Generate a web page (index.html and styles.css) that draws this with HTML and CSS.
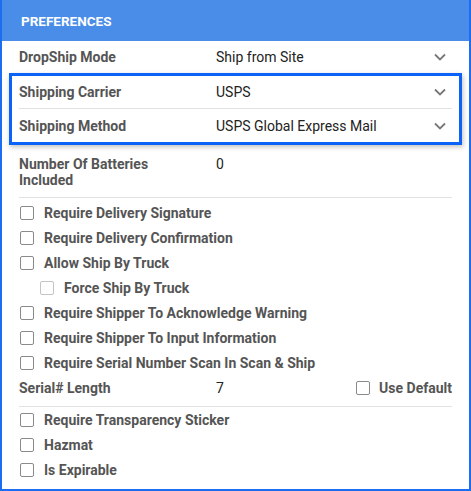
FILE: index.html
```html
<!DOCTYPE html>
<html lang="en">
<head>
  <meta charset="UTF-8" />
  <title>Preferences</title>
  <link rel="stylesheet" href="styles.css">
</head>
<body>
  <div class="panel">
    <!-- Header -->
    <div class="panel-header">PREFERENCES</div>

    <div class="panel-body">
      <div class="field-row">
        <div class="field-label">DropShip Mode</div>
        <div class="field-value">Ship from Site</div>
        <svg class="chevron" viewBox="0 0 12 8"><path d="M1 1.5 L6 6.5 L11 1.5" /></svg>
      </div>

      <!-- highlighted block -->
      <div class="highlight">
        <div class="field-row divided">
          <div class="field-label">Shipping Carrier</div>
          <div class="field-value">USPS</div>
          <svg class="chevron" viewBox="0 0 12 8"><path d="M1 1.5 L6 6.5 L11 1.5" /></svg>
        </div>
        <div class="field-row">
          <div class="field-label">Shipping Method</div>
          <div class="field-value">USPS Global Express Mail</div>
          <svg class="chevron" viewBox="0 0 12 8"><path d="M1 1.5 L6 6.5 L11 1.5" /></svg>
        </div>
      </div>

      <div class="field-row tall divided">
        <div class="field-label">Number Of Batteries<br>Included</div>
        <div class="field-value">0</div>
      </div>

      <div class="check-list">
        <label class="check"><span class="box"></span>Require Delivery Signature</label>
        <label class="check"><span class="box"></span>Require Delivery Confirmation</label>
        <label class="check"><span class="box"></span>Allow Ship By Truck</label>
        <label class="check sub"><span class="box light"></span>Force Ship By Truck</label>
        <label class="check"><span class="box"></span>Require Shipper To Acknowledge Warning</label>
        <label class="check"><span class="box"></span>Require Shipper To Input Information</label>
        <label class="check"><span class="box"></span>Require Serial Number Scan In Scan &amp; Ship</label>
      </div>

      <div class="field-row serial divided">
        <div class="field-label">Serial# Length</div>
        <div class="field-value">7</div>
        <label class="check"><span class="box"></span>Use Default</label>
      </div>

      <div class="check-list bottom">
        <label class="check"><span class="box"></span>Require Transparency Sticker</label>
        <label class="check"><span class="box"></span>Hazmat</label>
        <label class="check"><span class="box"></span>Is Expirable</label>
      </div>
    </div>
  </div>
</body>
</html>
```

FILE: styles.css
```css
/* Page */
body {
  margin: 0;
  font-family: Roboto, "Liberation Sans", sans-serif;
  background: #fff;
}

.panel {
  width: 471px;
  height: 491px;
  box-sizing: border-box;
  border: 2px solid #1d6df2;
  border-top: none;
  background: #fff;
}

/* Header */
.panel-header {
  height: 41px;
  display: flex;
  align-items: center;
  padding-left: 19px;
  background-color: #4a8de8;
  color: #fff;
  font-weight: 700;
  font-size: 13.5px;
}

.panel-body {
  padding: 0 17px;
}

/* Label / value rows */
.field-row {
  display: flex;
  align-items: center;
  height: 32px;
  font-size: 14px;
}
.field-row.divided {
  border-bottom: 1px solid #e2e2e2;
}

.field-label {
  width: 197px;
  flex-shrink: 0;
  color: #555;
  font-weight: 700;
}
.field-value {
  flex: 1;
  color: #222;
}

.chevron {
  width: 12px;
  height: 8px;
  margin-right: 6px;
  fill: none;
  stroke: #777;
  stroke-width: 1.8;
}

/* Blue framed block */
.highlight {
  margin: 0 -10px;
  padding: 0 7px;
  border: 3px solid #0a63f6;
  box-shadow: 1px 2px 5px rgba(0, 0, 0, 0.25);
}
.highlight .field-row {
  height: 33px;
}
.highlight .field-row.divided {
  height: 32px;
}

.field-row.tall {
  height: auto;
  align-items: flex-start;
  padding: 11px 0 9px;
  line-height: 16px;
}

/* Checkboxes */
.check-list {
  padding-top: 2px;
}
.check-list.bottom {
  padding-top: 0;
}

.check {
  display: flex;
  align-items: center;
  height: 25px;
  color: #555;
  font-size: 14px;
  font-weight: 700;
  padding-left: 1px;
}
.check.sub {
  padding-left: 21px;
}

.box {
  width: 12px;
  height: 12px;
  border: 1.5px solid #8a8a8a;
  border-radius: 2px;
  margin-right: 10px;
  flex-shrink: 0;
}
.box.light {
  border-color: #c4c4c4;
}

.field-row.serial {
  box-sizing: border-box;
  height: 32px;
  padding-bottom: 5px;
}
.field-row.serial .check {
  padding-left: 0;
}
.field-row.serial .box {
  margin-right: 9px;
}
```
